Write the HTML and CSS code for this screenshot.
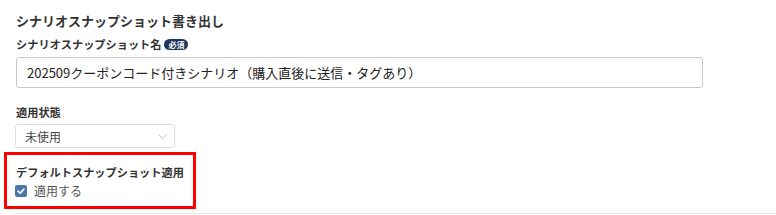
FILE: index.html
```html
<!DOCTYPE html>
<html lang="ja">
<head>
  <meta charset="UTF-8">
  <meta name="viewport" content="width=device-width, initial-scale=1.0">
  <title>シナリオスナップショット書き出し</title>
  <link rel="stylesheet" href="styles.css">
</head>
<body>
<div class="panel">
  <h2 class="title">シナリオスナップショット書き出し</h2>
  <div class="field">
    <label class="label">シナリオスナップショット名 <span class="req">必須</span></label>
    <div class="input">202509クーポンコード付きシナリオ（購入直後に送信・タグあり）</div>
  </div>
  <div class="field">
    <label class="label">適用状態</label>
    <div class="select">
      <span>未使用</span>
      <svg class="chev" width="9" height="5" viewBox="0 0 9 5"><path d="M0.5 0.5 L4.5 4.5 L8.5 0.5" fill="none" stroke="#c4c4c4" stroke-width="1"/></svg>
    </div>
  </div>
  <div class="field mark">
    <label class="label">デフォルトスナップショット適用</label>
    <div class="check-row">
      <span class="box"><svg width="12" height="12" viewBox="0 0 12 12"><path d="M3 6.2 L5.2 8.2 L9 4" fill="none" stroke="#fff" stroke-width="1.6" stroke-linecap="round" stroke-linejoin="round"/></svg></span>
      <span>適用する</span>
    </div>
  </div>
  <div class="rule"></div>
</div>
</body>
</html>
```

FILE: styles.css
```css
html, body{
  margin: 0;
  background: #fff;
  font-family: "Noto Sans CJK JP", "Noto Sans", sans-serif;
  color: #333;
}
.panel{
  padding: 11px 0 0 16px;
  display: flex;
  flex-direction: column;
}
.title{
  margin: 0 0 5px;
  font-size: 13px;
  line-height: 20px;
  font-weight: 700;
}
.field{
  display: flex;
  flex-direction: column;
  gap: 5px;
  margin-bottom: 16px;
}
.label{
  font-size: 11.2px;
  line-height: 16px;
  font-weight: 700;
  display: flex;
  align-items: center;
  gap: 3px;
}
.req{
  display: inline-block;
  background: #1e3559;
  color: #fff;
  font-size: 8px;
  line-height: 11px;
  padding: 0 4px;
  border-radius: 6px;
}
.input{
  width: 675px;
  height: 29px;
  border: 1px solid #c8c8c8;
  border-radius: 3px;
  padding: 0 0 0 10px;
  font-size: 13px;
  line-height: 29px;
  color: #222;
}
.field:nth-of-type(2){ gap: 4px; }
.select{
  width: 143px;
  height: 22px;
  border: 1px solid #dcdcdc;
  border-radius: 3px;
  padding: 0 6px 0 9px;
  display: flex;
  align-items: center;
  justify-content: space-between;
  font-size: 12px;
  color: #444;
  margin-left: -1px;
}
.chev{ margin-right: 1px; }
.mark{
  align-self: flex-start;
  gap: 3px;
  padding: 9px 9px 7px 9px;
  margin: -9px -9px 0 -9px;
  outline: 3px solid #f00;
}
.check-row{
  display: flex;
  align-items: center;
  gap: 7px;
  font-size: 12px;
  line-height: 16px;
  color: #555;
}
.box{
  width: 12px;
  height: 12px;
  border-radius: 2px;
  background: #4a78a8;
  display: flex;
  margin-left: -1px;
}
.rule{
  margin-top: 7px;
  border-top: 1px solid #e6e6e6;
  margin-left: -1px;
}
```
